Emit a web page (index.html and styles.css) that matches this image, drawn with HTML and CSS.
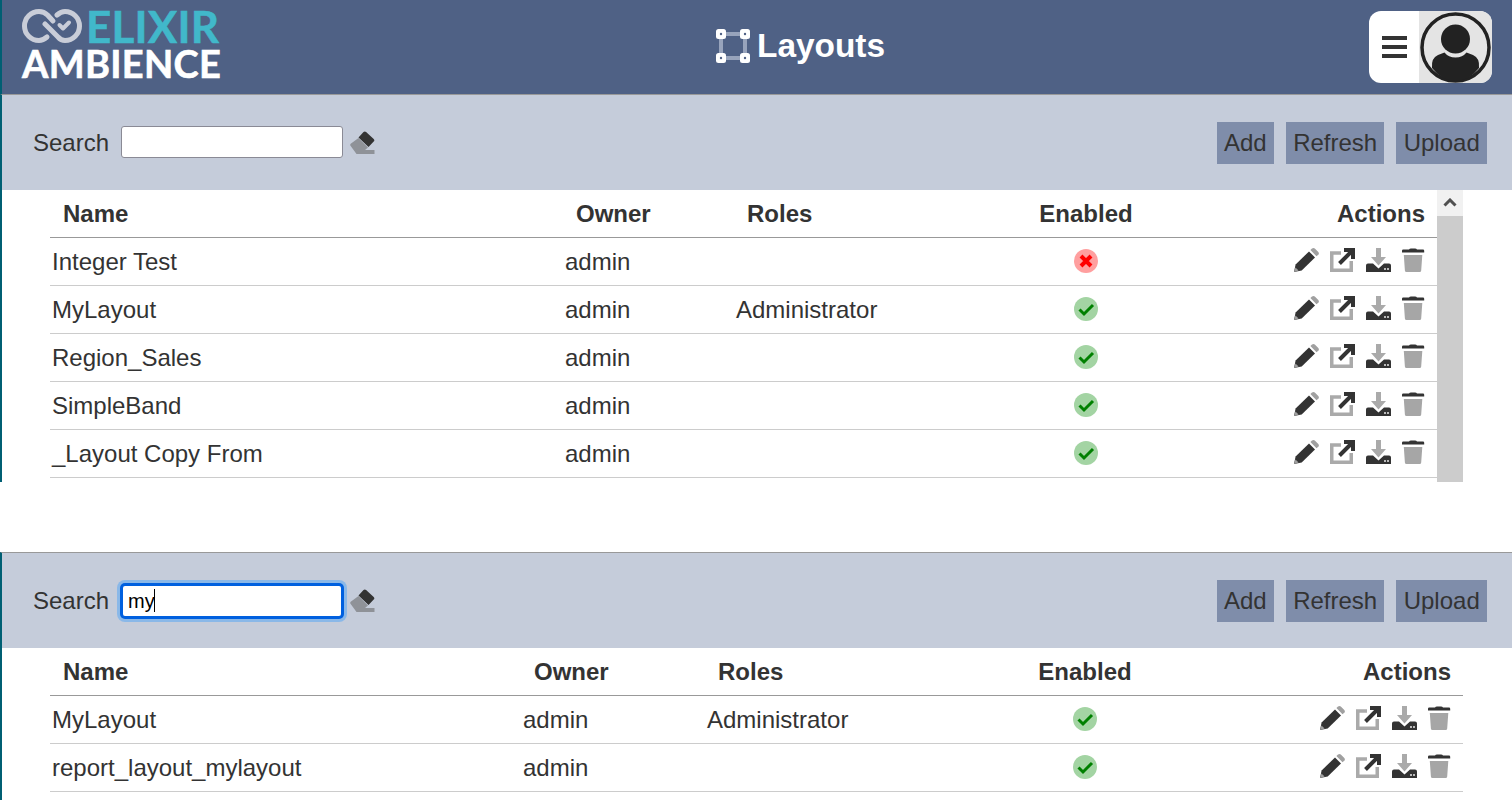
FILE: index.html
```html
<!DOCTYPE html>
<html lang="en">
<head>
<meta charset="utf-8">
<title>Layouts</title>
<link rel="stylesheet" href="styles.css">
</head>
<body>
<svg class="defs" width="0" height="0" aria-hidden="true">
  <defs>
    <symbol id="i-pencil" viewBox="0 0 25 24">
      <path fill="#333" d="M1.600 16.600 15 3.400l6 6L7.700 22.600 0 24z"/>
      <path fill="#a0a0a0" d="M16.400 2 18 .6c.9-.8 2-.8 2.800 0l3.500 3.400c.8.800.8 2 0 2.800L22.500 8.300z"/>
      <path fill="#a0a0a0" d="M1.500 19.500 4.600 22.600 0 24z"/>
    </symbol>
    <symbol id="i-ext" viewBox="0 0 25 24">
      <path fill="none" stroke="#aaa" stroke-width="3.500" d="M11 5H1.750v17.250h19.500V13"/>
      <path fill="none" stroke="#333" stroke-width="4" d="M14 2h9v9M9.500 15.500 22.500 2.500"/>
    </symbol>
    <symbol id="i-dl" viewBox="0 0 25 24">
      <path fill="#aaa" d="M10 0h5v9h5l-7.500 8.500L5 9h5z"/>
      <path fill="#333" d="M0 17.500q0-2 2-2h5l5.500 5 5.500-5h5q2 0 2 2V24H0z"/>
      <path fill="#bbb" d="M18 20h2v2h-2zm3 0h2v2h-2z"/>
    </symbol>
    <symbol id="i-trash" viewBox="0 0 25 24">
      <path fill="#333" d="M7 1.500Q7.500.4 9 .4h4q1.500 0 2 1.100h6q1.200 0 1.200 1.200V4.500H0V2.700q0-1.200 1.200-1.200z"/>
      <path fill="#a6a6a6" d="M1.800 7h18.500l-1.100 15.500q-.1 1.500-1.600 1.500H4.500q-1.500 0-1.600-1.500z"/>
    </symbol>
    <symbol id="i-ok" viewBox="0 0 24 24">
      <circle cx="12" cy="12" r="12" fill="#a3d4a3"/>
      <path fill="none" stroke="#008000" stroke-width="3" d="M5.500 12.500l4.500 4.500 9-9"/>
    </symbol>
    <symbol id="i-no" viewBox="0 0 24 24">
      <circle cx="12" cy="12" r="12" fill="#ff9f9f"/>
      <path fill="none" stroke="#f00" stroke-width="4" d="M7 7l10 10M17 7 7 17"/>
    </symbol>
    <symbol id="i-eraser" viewBox="0 0 25 23">
      <path fill="#333" d="M8.500 6.500 13.500 1q1.300-1.200 2.600 0l7.600 7q1.300 1.300 0 2.600L18.500 16z"/>
      <path fill="#8f9298" d="M8.500 7 18 16.500 15 19h9.500v4H6.500L.7 15q-1-1.100 0-2.200z"/>
    </symbol>
  </defs>
</svg>

<header class="app-header">
  <div class="logo">
    <div class="logo-top">
      <svg class="logo-mark" viewBox="0 0 60 34" aria-hidden="true">
        <g fill="none" stroke="#c9cdd8" stroke-width="5" stroke-linecap="round" stroke-linejoin="round">
          <path d="M31 12 25.500 6Q22 2.500 17 2.500A14.500 14.500 0 0 0 17 31.500Q21 31.500 25 28"/>
          <path d="M23 15 36 28Q39 31.500 43 31.500A14.500 14.500 0 0 0 43 2.500Q39 2.500 35 6"/>
          <path stroke-width="4" d="M37.500 16l3.500 3.500 6-6"/>
        </g>
      </svg>
      <span class="logo-elixir">ELIXIR</span>
    </div>
    <div class="logo-ambience">AMBIENCE</div>
  </div>
  <h1 class="page-title">
    <svg class="title-icon" viewBox="0 0 34 34" aria-hidden="true">
      <path fill="none" stroke="#98a4bc" stroke-width="4" d="M5 5h24v24H5z"/>
      <g fill="#fff">
        <rect width="10" height="10" rx="2.500"/><rect x="24" width="10" height="10" rx="2.500"/>
        <rect y="24" width="10" height="10" rx="2.500"/><rect x="24" y="24" width="10" height="10" rx="2.500"/>
      </g>
      <g fill="#4f6185">
        <circle cx="5" cy="5" r="1.200"/><circle cx="29" cy="5" r="1.200"/>
        <circle cx="5" cy="29" r="1.200"/><circle cx="29" cy="29" r="1.200"/>
      </g>
    </svg>
    Layouts
  </h1>
  <div class="user-menu">
    <div class="menu-btn">
      <svg width="25" height="22" viewBox="0 0 25 22" aria-hidden="true">
        <path fill="#333" d="M0 0h25v4H0zM0 9h25v4H0zM0 18h25v4H0z"/>
      </svg>
    </div>
    <div class="avatar">
      <svg width="73" height="72" viewBox="0 0 73 72" aria-hidden="true">
        <circle cx="36.500" cy="36.500" r="33.500" fill="#e4e4e4" stroke="#222" stroke-width="3.500"/>
        <circle cx="36.500" cy="28" r="14.500" fill="#222"/>
        <path fill="#222" d="M13 57Q12 47 19 44L25.500 41.500Q29.500 46.500 36.500 46.500T47.500 41.500L54 44Q61 47 60 57 50 70 36.500 70T13 57z"/>
      </svg>
    </div>
  </div>
</header>

<main class="panels">
  <section class="panel panel-first">
    <div class="toolbar">
      <div class="search">
        <label class="search-label" for="s1">Search</label>
        <input id="s1" class="search-input" type="text">
        <svg class="eraser"><use href="#i-eraser"/></svg>
      </div>
      <div class="buttons">
        <button class="btn" type="button">Add</button>
        <button class="btn" type="button">Refresh</button>
        <button class="btn" type="button">Upload</button>
      </div>
    </div>
    <div class="table-wrap">
      <table class="grid grid-a">
        <colgroup><col class="a1"><col class="a2"><col class="a3"><col class="a4"><col class="a5"></colgroup>
        <thead><tr><th>Name</th><th>Owner</th><th>Roles</th><th class="center">Enabled</th><th class="right">Actions</th></tr></thead>
        <tbody>
          <tr><td>Integer Test</td><td>admin</td><td></td><td class="center"><svg class="status"><use href="#i-no"/></svg></td><td class="actions"><div class="action-icons"><svg class="act"><use href="#i-pencil"/></svg><svg class="act"><use href="#i-ext"/></svg><svg class="act"><use href="#i-dl"/></svg><svg class="act"><use href="#i-trash"/></svg></div></td></tr>
          <tr><td>MyLayout</td><td>admin</td><td>Administrator</td><td class="center"><svg class="status"><use href="#i-ok"/></svg></td><td class="actions"><div class="action-icons"><svg class="act"><use href="#i-pencil"/></svg><svg class="act"><use href="#i-ext"/></svg><svg class="act"><use href="#i-dl"/></svg><svg class="act"><use href="#i-trash"/></svg></div></td></tr>
          <tr><td>Region_Sales</td><td>admin</td><td></td><td class="center"><svg class="status"><use href="#i-ok"/></svg></td><td class="actions"><div class="action-icons"><svg class="act"><use href="#i-pencil"/></svg><svg class="act"><use href="#i-ext"/></svg><svg class="act"><use href="#i-dl"/></svg><svg class="act"><use href="#i-trash"/></svg></div></td></tr>
          <tr><td>SimpleBand</td><td>admin</td><td></td><td class="center"><svg class="status"><use href="#i-ok"/></svg></td><td class="actions"><div class="action-icons"><svg class="act"><use href="#i-pencil"/></svg><svg class="act"><use href="#i-ext"/></svg><svg class="act"><use href="#i-dl"/></svg><svg class="act"><use href="#i-trash"/></svg></div></td></tr>
          <tr><td>_Layout Copy From</td><td>admin</td><td></td><td class="center"><svg class="status"><use href="#i-ok"/></svg></td><td class="actions"><div class="action-icons"><svg class="act"><use href="#i-pencil"/></svg><svg class="act"><use href="#i-ext"/></svg><svg class="act"><use href="#i-dl"/></svg><svg class="act"><use href="#i-trash"/></svg></div></td></tr>
        </tbody>
      </table>
      <div class="scrollbar">
        <div class="scroll-up">
          <svg width="14" height="9" viewBox="0 0 14 9" aria-hidden="true"><path fill="none" stroke="#505050" stroke-width="3" d="M1.500 7.500 7 2l5.500 5.500"/></svg>
        </div>
      </div>
    </div>
  </section>

  <section class="panel panel-second">
    <div class="toolbar">
      <div class="search">
        <label class="search-label" for="s2">Search</label>
        <div class="input-holder">
          <input id="s2" class="search-input is-focused" type="text" value="my">
          <span class="caret"></span>
        </div>
        <svg class="eraser"><use href="#i-eraser"/></svg>
      </div>
      <div class="buttons">
        <button class="btn" type="button">Add</button>
        <button class="btn" type="button">Refresh</button>
        <button class="btn" type="button">Upload</button>
      </div>
    </div>
    <div class="table-wrap">
      <table class="grid grid-b">
        <colgroup><col class="b1"><col class="b2"><col class="b3"><col class="b4"><col class="b5"></colgroup>
        <thead><tr><th>Name</th><th>Owner</th><th>Roles</th><th class="center">Enabled</th><th class="right">Actions</th></tr></thead>
        <tbody>
          <tr><td>MyLayout</td><td>admin</td><td>Administrator</td><td class="center"><svg class="status"><use href="#i-ok"/></svg></td><td class="actions"><div class="action-icons"><svg class="act"><use href="#i-pencil"/></svg><svg class="act"><use href="#i-ext"/></svg><svg class="act"><use href="#i-dl"/></svg><svg class="act"><use href="#i-trash"/></svg></div></td></tr>
          <tr><td>report_layout_mylayout</td><td>admin</td><td></td><td class="center"><svg class="status"><use href="#i-ok"/></svg></td><td class="actions"><div class="action-icons"><svg class="act"><use href="#i-pencil"/></svg><svg class="act"><use href="#i-ext"/></svg><svg class="act"><use href="#i-dl"/></svg><svg class="act"><use href="#i-trash"/></svg></div></td></tr>
        </tbody>
      </table>
    </div>
  </section>
</main>
</body>
</html>
```

FILE: styles.css
```css
* { box-sizing: border-box; }

html, body {
  margin: 0;
  height: 800px;
  overflow: hidden;
  background: #fff;
}

body {
  font-family: "Liberation Sans", Arial, sans-serif;
  font-size: 24px;
  color: #333;
}

.defs { display: block; height: 0; }

.app-header {
  height: 95px;
  display: flex;
  align-items: center;
  justify-content: space-between;
  padding: 0 20px 1px 20px;
  background: #4f6185;
  border-bottom: 1px solid #999;
  border-left: 2px solid #005f73;
}

.logo {
  align-self: flex-start;
  width: 210px;
  padding-top: 9px;
  font-family: Lato, sans-serif;
  font-weight: 700;
}

.logo-top {
  display: flex;
  align-items: center;
  gap: 4px;
  height: 34px;
}

.logo-mark { width: 60px; height: 34px; flex: none; }

.logo-elixir {
  font-size: 44px;
  line-height: 34px;
  color: #41b8ca;
  letter-spacing: .2px;
  -webkit-text-stroke: .5px #41b8ca;
}

.logo-ambience {
  margin-top: 5px;
  font-size: 38px;
  line-height: 30px;
  color: #fff;
  letter-spacing: .3px;
  white-space: nowrap;
  -webkit-text-stroke: .6px #fff;
}

.page-title {
  margin: 0 0 2px;
  display: flex;
  align-items: center;
  gap: 7px;
  font-size: 33.400px;
  font-weight: 700;
  color: #fff;
}

.title-icon { width: 34px; height: 34px; }

.user-menu {
  display: flex;
  width: 123px;
  height: 72px;
  border-radius: 12px;
  overflow: hidden;
  background: #fff;
}

.menu-btn {
  width: 50px;
  padding-left: 13px;
  display: flex;
  align-items: center;
}

.avatar {
  width: 73px;
  background: #e4e4e4;
}

.avatar svg { display: block; }

.panel { border-left: 2px solid #005f73; }

.panel-first { height: 387px; }

.panel-second {
  margin-top: 70px;
  border-top: 1px solid #999;
  height: 248px;
}

.toolbar {
  height: 95px;
  display: flex;
  align-items: center;
  justify-content: space-between;
  padding: 0 25px 0 31px;
  background: #c5ccda;
}

.search { display: flex; align-items: center; gap: 12px; }

.search-label { color: #333; }

.search-input {
  display: block;
  width: 222px;
  height: 32px;
  margin-bottom: 1px;
  padding: 2px 5px;
  border: 1px solid #8a8a95;
  border-radius: 3px;
  background: #fff;
  font: 20px "Liberation Sans", Arial, sans-serif;
  color: #000;
  outline: none;
}

.search-input.is-focused {
  height: 34px;
  margin: 1px 0 0;
  border: 2px solid #0060df;
  border-radius: 4px;
  box-shadow: 0 0 0 1px #0060df, 0 0 0 4px #8ab8e8;
}

.input-holder { position: relative; }

.caret {
  position: absolute;
  left: 33px;
  top: 6px;
  width: 1px;
  height: 23px;
  background: #000;
}

.eraser { width: 25px; height: 23px; margin-left: -5px; }

.buttons { display: flex; gap: 12px; }

.btn {
  height: 42px;
  padding: 0 7.250px;
  border: 0;
  background: #7f8daa;
  font: inherit;
  color: #333;
}

.table-wrap { display: flex; align-items: flex-start; padding-left: 48px; }

.grid {
  border-collapse: separate;
  border-spacing: 0;
  table-layout: fixed;
  flex: none;
}

.grid-a { width: 1387px; }
.grid-b { width: 1413px; }

.a1 { width: 513px; } .a2 { width: 171px; } .a3 { width: 270px; } .a4 { width: 164px; } .a5 { width: 269px; }
.b1 { width: 471px; } .b2 { width: 184px; } .b3 { width: 297px; } .b4 { width: 166px; } .b5 { width: 295px; }

th, td {
  height: 48px;
  padding: 0 0 0 2px;
  text-align: left;
  vertical-align: middle;
  border-bottom: 1px solid #ccc;
  white-space: nowrap;
}

th {
  padding-left: 13px;
  border-bottom-color: #999;
  font-weight: 700;
}

th.center, td.center { padding: 0; text-align: center; }
th.right { padding: 0 12px 0 0; text-align: right; }

.status { display: block; width: 24px; height: 24px; margin: -2px auto 0; }

td.actions { padding: 0 10px 0 0; }

.action-icons {
  display: flex;
  justify-content: flex-end;
  gap: 11px;
  margin-top: -3px;
}

.act { width: 25px; height: 24px; display: block; }

.scrollbar {
  width: 26px;
  height: 292px;
  background: #ccc;
}

.scroll-up {
  height: 26px;
  background: #f1f1f1;
  display: flex;
  align-items: center;
  justify-content: center;
  padding-bottom: 2px;
}
```
